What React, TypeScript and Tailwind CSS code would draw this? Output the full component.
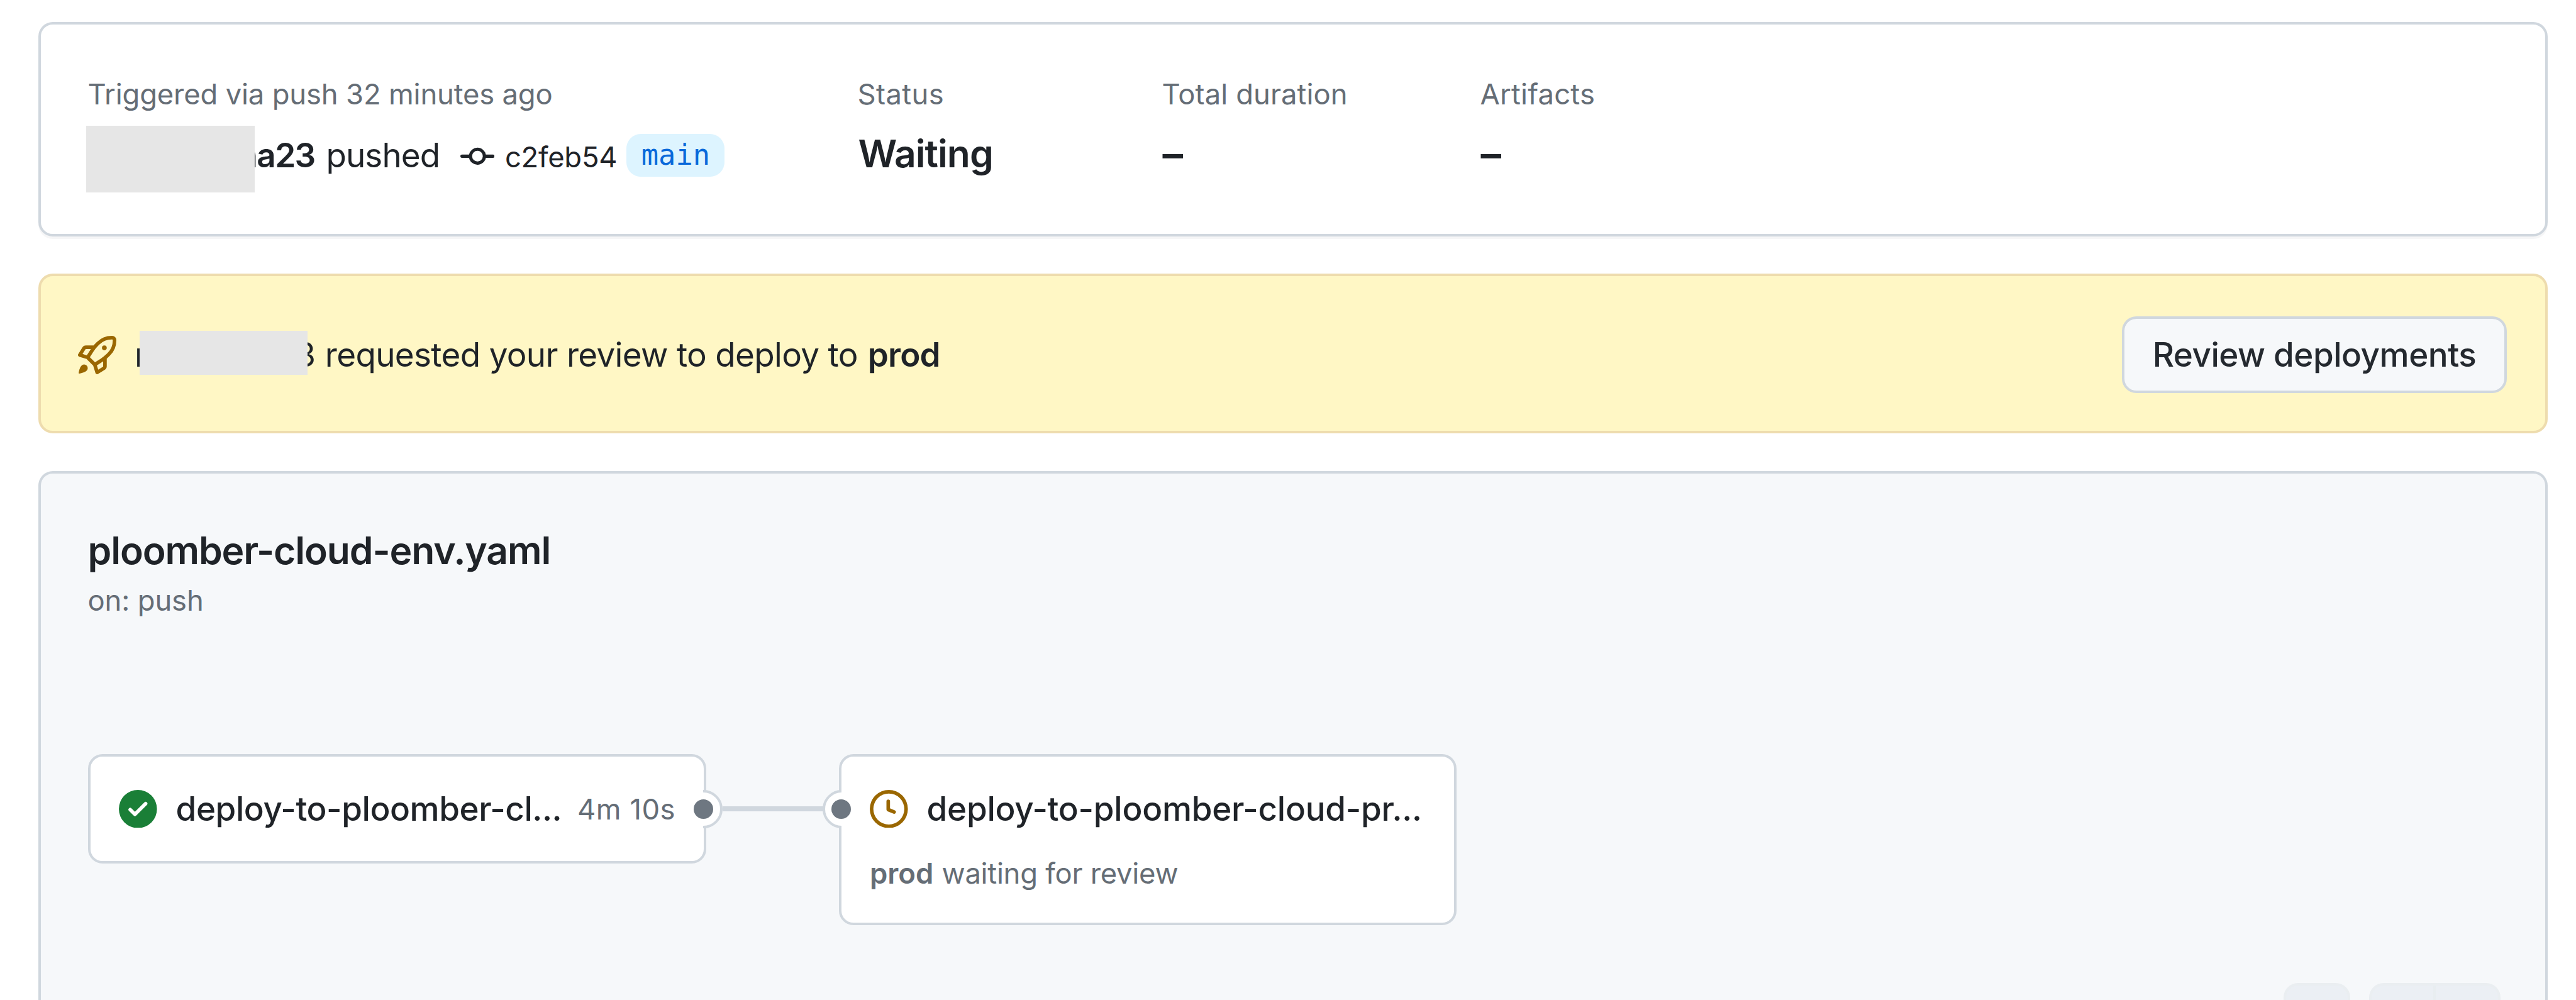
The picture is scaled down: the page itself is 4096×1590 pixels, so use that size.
import type { ReactNode } from "react";

const ICONS = {
  commit:
    "M11.93 8.5a4.002 4.002 0 0 1-7.86 0H.75a.75.75 0 0 1 0-1.5h3.32a4.002 4.002 0 0 1 7.86 0h3.32a.75.75 0 0 1 0 1.5Zm-1.43-.75a2.5 2.5 0 1 0-5 0 2.5 2.5 0 0 0 5 0Z",
  rocket:
    "M14.064 0h.186C15.216 0 16 .784 16 1.75v.186a8.752 8.752 0 0 1-2.564 6.186l-.458.459c-.314.314-.641.616-.979.904v3.207c0 .608-.315 1.172-.833 1.49l-2.774 1.707a.749.749 0 0 1-1.11-.418l-.954-3.102a1.214 1.214 0 0 1-.145-.125L3.754 9.816a1.218 1.218 0 0 1-.124-.145L.528 8.717a.749.749 0 0 1-.418-1.11l1.71-2.774A1.748 1.748 0 0 1 3.31 4h3.204c.288-.338.59-.665.904-.979l.459-.458A8.749 8.749 0 0 1 14.064 0ZM8.938 3.623h-.002l-.458.458c-.76.76-1.437 1.598-2.02 2.5l-1.5 2.317 2.143 2.143 2.317-1.5c.902-.583 1.74-1.26 2.499-2.02l.459-.458a7.25 7.25 0 0 0 2.123-5.127V1.75a.25.25 0 0 0-.25-.25h-.186a7.249 7.249 0 0 0-5.125 2.123ZM3.56 14.56c-.732.732-2.334 1.045-3.005 1.148a.234.234 0 0 1-.201-.064.234.234 0 0 1-.064-.201c.103-.671.416-2.273 1.15-3.003a1.502 1.502 0 1 1 2.12 2.12Zm6.94-3.935c-.088.06-.177.118-.266.175l-2.35 1.521.548 1.783 1.949-1.2a.25.25 0 0 0 .119-.213ZM3.678 8.116 5.2 5.766c.058-.09.117-.178.176-.266H3.309a.25.25 0 0 0-.213.119l-1.2 1.95ZM12 5a1 1 0 1 1-2 0 1 1 0 0 1 2 0Z",
  check:
    "M8 16A8 8 0 1 1 8 0a8 8 0 0 1 0 16Zm3.78-9.72a.751.751 0 0 0-.018-1.042.751.751 0 0 0-1.042-.018L6.75 9.19 5.28 7.72a.751.751 0 0 0-1.042.018.751.751 0 0 0-.018 1.042l2 2a.75.75 0 0 0 1.06 0Z",
  clock:
    "M8 0a8 8 0 1 1 0 16A8 8 0 0 1 8 0ZM1.5 8a6.5 6.5 0 1 0 13 0 6.5 6.5 0 0 0-13 0Zm7-3.25v2.992l2.028.812a.75.75 0 0 1-.557 1.392l-2.5-1A.751.751 0 0 1 7 8.25v-3.5a.75.75 0 0 1 1.5 0Z",
};

function Icon({ name, className }: { name: keyof typeof ICONS; className: string }) {
  return (
    <svg viewBox="0 0 16 16" fill="currentColor" className={`shrink-0 ${className}`}>
      <path d={ICONS[name]} />
    </svg>
  );
}

function Stat({ label, labelClass, value, valueClass, className }: { label: string; labelClass: string; value: string; valueClass: string; className: string }) {
  return (
    <div className={className}>
      <div className={`text-[45.4px] leading-[72px] text-[#656d76] ${labelClass}`}>{label}</div>
      <div className={`leading-[80px] font-semibold text-[#1f2328] ${valueClass}`}>{value}</div>
    </div>
  );
}

function Job({ children, className }: { children: ReactNode; className: string }) {
  return (
    <div className={`relative rounded-[23px] border-4 border-[#d0d7de] bg-white px-[45px] pt-[52.5px] ${className}`}>
      {children}
    </div>
  );
}

export default function App() {
  return (
    <div className="flex h-[1590px] w-[4096px] flex-col overflow-hidden bg-white pt-[35px] pr-[45px] pl-[61px] font-['Inter',sans-serif] whitespace-nowrap text-[#1f2328]">
      {/* Run summary */}
      <section className="flex h-[341px] shrink-0 rounded-[23px] border-4 border-[#d0d7de] pt-[74.5px] pl-[74.5px] shadow-[0_4px_0_rgba(31,35,40,0.04)]">
        <div className="w-[1224px]">
          <div className="text-[45.4px] leading-[72px] tracking-[-0.18px] text-[#656d76]">
            Triggered via push 32 minutes ago
          </div>
          <div className="-ml-[2.5px] flex items-start">
            <div className="relative z-10 mt-[14px] h-[106px] w-[267.5px] shrink-0 bg-[#e6e6e6]" />
            <div className="mt-[31px] -ml-[27px] w-[141px] text-[53px] leading-[60px] font-semibold tracking-[-1.6px]">na23</div>
            <div className="mt-[31px] w-[213px] text-[53px] leading-[60px] tracking-[-0.96px]">pushed</div>
            <Icon name="commit" className="mt-[36px] size-[54.4px]" />
            <div className="mt-[34px] ml-[17px] w-[193.5px] text-[45.4px] leading-[60px] tracking-[-0.27px]">c2feb54</div>
            <div className="mt-[27px] flex h-[68px] w-[156px] items-center justify-center rounded-[23px] bg-[#ddf4ff] font-['DejaVu_Sans_Mono',monospace] text-[45.4px] leading-[60px] text-[#0969da]">
              main
            </div>
          </div>
        </div>
        <Stat label="Status" labelClass="tracking-[0.37px]" value="Waiting" valueClass="mt-[18px] pl-px text-[60.6px] tracking-[-1px]" className="w-[484px]" />
        <Stat label="Total duration" labelClass="tracking-[0.06px]" value="–" valueClass="mt-[19px] pl-px text-[65px]" className="w-[506px]" />
        <Stat label="Artifacts" labelClass="tracking-[0.19px]" value="–" valueClass="mt-[19px] pl-px text-[65px]" className="w-[506px]" />
      </section>

      {/* Pending review banner */}
      <section className="mt-[59px] flex h-[254px] shrink-0 items-center rounded-[23px] border-4 border-[#eedcae] bg-[#fff7c5] pt-[4px] pr-[61px] pl-[59px]">
        <Icon name="rocket" className="size-[61px] text-[#9a6700]" />
        <div className="ml-[29px] flex items-center text-[53px] leading-[72px]">
          <span>n</span>
          <span className="relative z-10 mb-[7px] -ml-[23px] h-[70px] w-[267px] bg-[#e6e6e6]" />
          <span className="-ml-[20px] w-[47.5px]">3</span>
          <span className="w-[863px] tracking-[-0.69px]">requested your review to deploy to</span>
          <strong className="font-semibold tracking-[-0.81px]">prod</strong>
        </div>
        <button className="ml-auto h-[121.5px] w-[612px] rounded-[23px] border-4 border-[#d0d7de] bg-[#f6f8fa] text-[53px] leading-[72px] font-medium tracking-[-0.5px] text-[#24292f]">
          Review deployments
        </button>
      </section>

      {/* Workflow graph */}
      <section className="relative mt-[60px] h-[900px] shrink-0 rounded-t-[23px] border-4 border-b-0 border-[#d0d7de] bg-[#f6f8fa] pt-[82px] pl-[74.5px]">
        <h2 className="text-[60.6px] leading-[80px] font-semibold tracking-[-1.12px]">ploomber-cloud-env.yaml</h2>
        <p className="mt-[10px] text-[45.4px] leading-[60px] tracking-[-0.15px] text-[#656d76]">on: push</p>

        <div className="mt-[214px] ml-[0.5px] flex items-start">
          <Job className="h-[174px] w-[983px]">
            <div className="flex items-center">
              <Icon name="check" className="size-[60.6px] text-[#1a7f37]" />
              <span className="ml-[30px] w-[638.5px] text-[53px] leading-[60px] font-medium tracking-[-0.44px]">deploy-to-ploomber-cl...</span>
              <span className="mt-[2px] text-[45.4px] leading-[58px] tracking-[0.51px] text-[#656d76]">4m 10s</span>
            </div>
            <span className="absolute top-[52.5px] -right-[30px] h-[61px] w-[31px] overflow-hidden">
              <span className="absolute top-0 right-0 size-[61px] rounded-full border-4 border-[#d0d7de] bg-white" />
            </span>
            <span className="absolute top-[67.5px] -right-[15px] size-[31px] rounded-full bg-[#6e7781]" />
          </Job>
          <div className="mt-[83px] mr-[-1px] ml-[26px] h-[8px] w-[160px] bg-[#d0d7de]" />
          <div className="w-[26px]" />
          <Job className="h-[272px] w-[982px]">
            <div className="flex items-center">
              <Icon name="clock" className="size-[60.6px] text-[#9a6700]" />
              <span className="ml-[30px] text-[53px] leading-[60px] font-medium tracking-[-0.27px]">deploy-to-ploomber-cloud-pr...</span>
            </div>
            <p className="mt-[43px] flex text-[45.4px] leading-[60px] text-[#656d76]">
              <strong className="w-[114.5px] font-semibold">prod</strong>
              <span className="tracking-[-0.27px]">waiting for review</span>
            </p>
            <span className="absolute top-[52.5px] -left-[30px] h-[61px] w-[30px] overflow-hidden">
              <span className="absolute top-0 left-0 size-[61px] rounded-full border-4 border-[#d0d7de] bg-white" />
            </span>
            <span className="absolute top-[67.5px] -left-[16px] size-[31px] rounded-full bg-[#6e7781]" />
          </Job>
        </div>

        {/* Zoom controls docked over the canvas */}
        <div className="absolute top-[810px] left-[3566px] flex gap-[30px]">
          <div className="h-[121px] w-[106px] rounded-[23px] border-4 border-[#eaeef1] bg-[#ebeff4]" />
          <div className="flex h-[121px] w-[209px] rounded-[23px] border-4 border-[#eaeef1] bg-[#ebeff4]">
            <div className="w-[102px] border-r-4 border-[#e8edf0]" />
          </div>
        </div>
      </section>
    </div>
  );
}
